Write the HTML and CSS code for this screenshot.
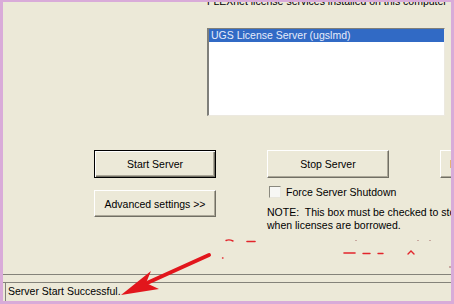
FILE: index.html
```html
<!DOCTYPE html>
<html>
<head>
<meta charset="utf-8">
<link rel="stylesheet" href="styles.css">
</head>
<body>
<div class="frame">
  <div class="dialog">
    <div class="services">
      <p class="caption">FLEXnet license services installed on this computer</p>
      <div class="listbox">
        <div class="item selected">UGS License Server (ugslmd)</div>
      </div>
    </div>
    <div class="controls">
      <button class="btn default">Start Server</button>
      <button class="btn">Stop Server</button>
      <button class="btn clipped">ReRead License File</button>
      <button class="btn advanced">Advanced settings &gt;&gt;</button>
      <div class="force">
        <label class="check"><span class="box"></span>Force Server Shutdown</label>
        <p class="note">NOTE:&nbsp; This box must be checked to stop a license server<br>when licenses are borrowed.</p>
      </div>
    </div>
    <div class="statusbar">
      <div class="panel">Server Start Successful.</div>
    </div>
  </div>
  <svg class="annot" width="454" height="304" viewBox="0 0 454 304">
    <g fill="none" stroke="#e2252b" stroke-linecap="round">
      <path d="M226 240.5 q3 -1.5 7 0.5" stroke-width="1.4"/>
      <path d="M247 241.5 h8" stroke-width="1.6"/>
      <path d="M344 253 h11" stroke-width="1.6"/>
      <path d="M363 253.5 h7" stroke-width="1.4"/>
      <path d="M378 253.5 h5" stroke-width="1.4"/>
      <path d="M408 254 l3 -3 l3 3" stroke-width="1.4"/>
      <path d="M222.5 258 h0.5" stroke-width="1.4"/>
    </g>
    <g fill="#c9a9a0">
      <rect x="355" y="240" width="2" height="1"/>
      <rect x="417" y="240" width="2" height="1"/>
      <rect x="429" y="240" width="2" height="1"/>
      <rect x="449" y="266" width="2" height="2"/>
    </g>
    <line x1="209" y1="255" x2="147" y2="283" stroke="#e2161c" stroke-width="4" stroke-linecap="round"/>
    <polygon points="121,295 151,271 146,283 159,289" fill="#e2161c"/>
  </svg>
</div>
</body>
</html>
```

FILE: styles.css
```css
html, body {
  margin: 0;
  padding: 0;
  width: 454px;
  height: 304px;
  overflow: hidden;
  background: #d9abd9;
}

.frame {
  position: relative;
  width: 454px;
  height: 304px;
  box-sizing: border-box;
  border-style: solid;
  border-color: #d9abd9;
  border-width: 2px 3px 3px 3px;
  font-family: "Liberation Sans", Arial, sans-serif;
  font-size: 10.5px;
  color: #000;
}

.dialog {
  height: 100%;
  background: #ece9d8;
  display: flex;
  flex-direction: column;
  overflow: hidden;
}

.services {
  margin-left: 204px;
}

.caption {
  margin: -7px 0 0 0;
  line-height: 13px;
  white-space: nowrap;
}

.listbox {
  margin-top: 20px;
  width: 238px;
  height: 88px;
  box-sizing: border-box;
  background: #fff;
  border-style: solid;
  border-width: 1px 1px 1px 2px;
  border-color: #7f7f7a #ece9e0 #ece9e0 #7f7f7a;
}

.item {
  height: 13px;
  line-height: 13px;
  padding-left: 2px;
  white-space: nowrap;
}

.selected {
  background: #316ac5;
  color: #e6ecfb;
}

.controls {
  margin: 34px 0 0 91px;
  display: grid;
  grid-template-columns: 122px 122px 122px;
  grid-template-rows: 28px auto;
  column-gap: 51px;
  row-gap: 7px;
  align-items: start;
}

.btn {
  font: inherit;
  color: #000;
  height: 28px;
  width: 122px;
  padding: 0;
  box-sizing: border-box;
  background: #ece9d8;
  border: 1px solid;
  border-color: #fff #716f64 #716f64 #fff;
  box-shadow: inset -1px -1px #aca899;
  white-space: nowrap;
  overflow: hidden;
}

.default {
  border-color: #000;
  box-shadow: inset 1px 1px #fff, inset -1px -1px #716f64, inset -2px -2px #aca899;
}

.clipped {
  text-align: left;
  padding-left: 9px;
}

.advanced {
  height: 27px;
  margin-top: 5px;
}

.force {
  grid-column: 2 / span 2;
}

.check {
  display: flex;
  align-items: center;
  height: 14px;
  white-space: nowrap;
}

.box {
  width: 12px;
  height: 12px;
  box-sizing: border-box;
  margin: 0 5px 0 2px;
  background: #f7f7f4;
  border: 1px solid;
  border-color: #8a897f #e8e6dc #e8e6dc #8a897f;
}

.note {
  margin: 7px 0 0 0;
  line-height: 13px;
  white-space: nowrap;
}

.statusbar {
  margin-top: auto;
  height: 27px;
  box-sizing: border-box;
  border-top: 1px solid #84837a;
  padding-top: 7px;
}

.panel {
  border-top: 1px solid #84837a;
  height: 19px;
  box-sizing: border-box;
  position: relative;
}

.panel {
  margin-left: 0;
  padding-left: 5px;
  line-height: 17px;
  background:
    linear-gradient(#84837a, #84837a) 2px 0 / 1px 100% no-repeat,
    #ece9d8;
  white-space: nowrap;
}

.annot {
  position: absolute;
  left: -3px;
  top: -2px;
  pointer-events: none;
}
```
